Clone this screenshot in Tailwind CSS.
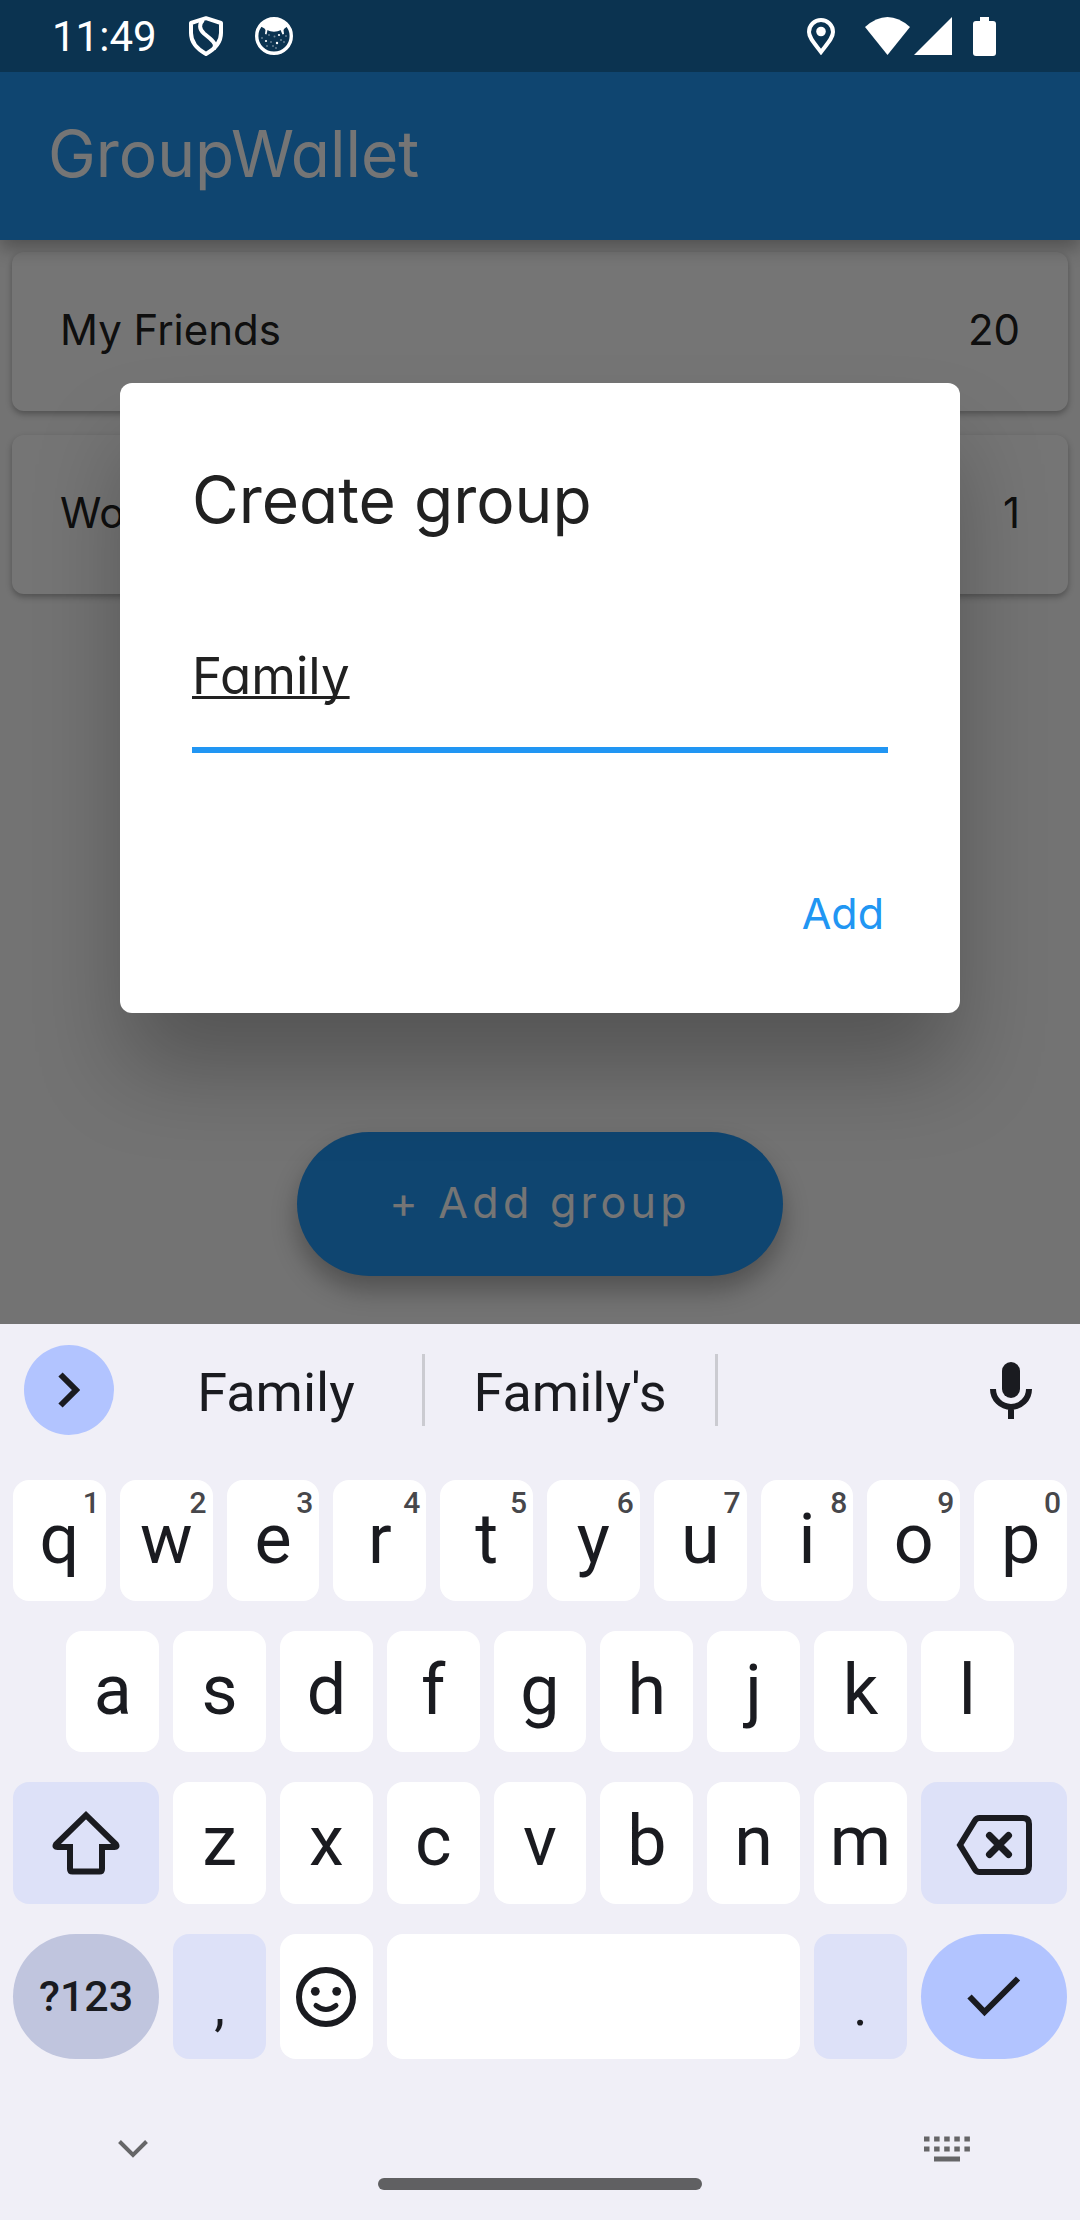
<!DOCTYPE html>
<html lang="en">
<head>
<meta charset="utf-8">
<meta name="viewport" content="width=device-width, initial-scale=1">
<title>GroupWallet</title>
<script src="https://cdn.jsdelivr.net/npm/@tailwindcss/browser@4"></script>
</head>
<body class="flex min-h-screen flex-col bg-[#f0eff7] font-['Inter',sans-serif]">

<!-- App -->
<div class="relative flex flex-1 flex-col bg-[#fafafa] text-[42px] text-[#212121] [font-feature-settings:'cv11']">
  <header class="relative z-10 bg-[#2196f3] shadow-[0_8px_18px_rgba(0,0,0,0.3)]">
    <div class="h-[72px] bg-[#186fae]"></div>
    <h1 class="flex h-[168px] items-center px-12 pb-1 text-[64px] font-normal text-white">GroupWallet</h1>
  </header>
  <ul class="flex flex-1 flex-col gap-6 p-3">
    <li class="flex h-[159px] items-center justify-between rounded-xl bg-white px-12 pb-1 shadow-[0_3px_6px_rgba(0,0,0,0.3)]"><span>My Friends</span><span>20</span></li>
    <li class="flex h-[159px] items-center justify-between rounded-xl bg-white px-12 pb-1 shadow-[0_3px_6px_rgba(0,0,0,0.3)]"><span>Work</span><span>1</span></li>
  </ul>
  <div class="flex justify-center pb-12">
    <button class="h-[144px] rounded-full bg-[#2196f3] px-[92px] pb-1 text-[43px] tracking-widest text-white shadow-[0_14px_26px_rgba(0,0,0,0.3)]">+ Add group</button>
  </div>

  <!-- Modal -->
  <div class="absolute inset-0 z-20 flex flex-col overflow-hidden bg-black/54">
    <div class="flex h-[72px] items-center justify-between pr-[84px] pl-[52px] font-['Roboto',sans-serif] text-white">
      <div class="flex items-center gap-8">
        <span>11:49</span>
        <svg class="h-10 w-[34px]" viewBox="0 0 34 40" fill="none" stroke="currentColor" stroke-width="4" stroke-linejoin="round"><path d="M17 2.200 32 7V17C32 27 25 33.500 17 38 9 33.500 2 27 2 17V7Z"/><path d="M14 4C10 8 10 13 15 17.500L21 22.500C26 27 27 29 25 33"/></svg>
        <svg class="size-[38px]" viewBox="0 0 38 38" fill="currentColor"><circle cx="19" cy="19" r="17.300" fill="none" stroke="currentColor" stroke-width="3.400"/><path d="M5 9 12 2H26L33 9 29.500 11.500 28.500 13 29 17 27.500 17.500 25.500 13C22 15.300 16 15.300 12.500 13L11.500 17.500 10 17 10.500 13 9.500 11.500Z"/><circle cx="24" cy="18" r="1.100"/><circle cx="22" cy="26" r="1.200"/><circle cx="11" cy="24" r="1.100"/><g opacity=".4"><circle cx="14" cy="18" r=".9"/><circle cx="19.500" cy="19.500" r="1"/><circle cx="26" cy="23" r="1"/><circle cx="16" cy="25" r=".9"/><circle cx="12" cy="29" r=".9"/><circle cx="18" cy="29" r=".9"/><circle cx="29" cy="25" r=".9"/><circle cx="31" cy="19" r=".9"/><circle cx="7" cy="21" r=".9"/><circle cx="21" cy="31" r=".9"/></g></svg>
      </div>
      <div class="flex items-center">
        <svg class="mr-[30px] h-[37px] w-7" viewBox="0 0 28 37"><path d="M14 34C8 26 2 20 2 14A12 12 0 0 1 26 14C26 20 20 26 14 34Z" fill="none" stroke="currentColor" stroke-width="4"/><circle cx="14" cy="13.500" r="4.800" fill="currentColor"/></svg>
        <svg class="mr-1 h-[38px] w-[45px]" viewBox="0 0 45 38" fill="currentColor"><path d="M0 10Q22.500-10 45 10L22.500 38Z"/></svg>
        <svg class="mr-[21px] size-[38px]" viewBox="0 0 38 38" fill="currentColor"><path d="M38 0V38H0Z"/></svg>
        <svg class="h-[39px] w-[23px]" viewBox="0 0 23 39" fill="currentColor"><rect y="4" width="23" height="35" rx="3"/><rect x="7" width="9" height="6"/></svg>
      </div>
    </div>
    <div class="flex flex-1 items-center px-[120px]">
      <form role="dialog" aria-labelledby="dlg" class="flex w-full flex-col rounded-xl bg-white px-[72px] pt-[72px] pb-12 shadow-[0_60px_90px_-6px_rgba(0,0,0,0.27)]">
        <h2 id="dlg" class="text-[64px] leading-[90px] font-normal">Create group</h2>
        <input type="text" aria-label="Group name" value="Family" class="mt-[62px] h-[146px] w-full border-b-[6px] border-[#2196f3] pb-1 text-[51px] underline decoration-3 underline-offset-2 outline-none [text-decoration-skip-ink:none]">
        <button type="button" class="mt-28 h-[100px] self-end px-1 pb-1 text-[43px] text-[#2196f3]">Add</button>
      </form>
    </div>
  </div>
</div>

<!-- Keyboard -->
<div class="bg-[#f0eff7] font-['Roboto',sans-serif] text-[#1a1b20]">
  <div class="grid h-[132px] grid-cols-[130px_295fr_293fr_362fr] items-center text-[54px]">
    <button aria-label="More tools" class="ml-6 flex size-[90px] items-center justify-center rounded-full bg-[#b2c4ff]"><svg class="h-9 w-[22px]" viewBox="0 0 22 36" fill="none" stroke="currentColor" stroke-width="6"><path d="M2.500 2.500 18 18 2.500 33.500"/></svg></button>
    <button class="h-[72px] border-r-[3px] border-[#cbcbd1] pt-1.5 leading-[66px]">Family</button>
    <button class="h-[72px] border-r-[3px] border-[#cbcbd1] pt-1.5 leading-[66px]">Family's</button>
    <button aria-label="Voice input" class="flex justify-end pr-12"><svg class="h-[57px] w-[42px]" viewBox="0 0 42 57"><rect x="12" width="18" height="36" rx="9" fill="currentColor"/><path d="M3 27a18 18 0 0 0 36 0M21 45V57" fill="none" stroke="currentColor" stroke-width="6"/></svg></button>
  </div>

  <div class="mt-6 flex flex-col gap-[30px] px-[13px] text-[70px]">
    <div class="grid h-[121px] grid-cols-20 gap-x-3.5">
      <button class="relative col-span-2 rounded-2xl bg-white pb-1 leading-none">q<span class="absolute top-2 right-1.5 text-[30px] leading-none font-medium text-[#47474b]">1</span></button>
      <button class="relative col-span-2 rounded-2xl bg-white pb-1 leading-none">w<span class="absolute top-2 right-1.5 text-[30px] leading-none font-medium text-[#47474b]">2</span></button>
      <button class="relative col-span-2 rounded-2xl bg-white pb-1 leading-none">e<span class="absolute top-2 right-1.5 text-[30px] leading-none font-medium text-[#47474b]">3</span></button>
      <button class="relative col-span-2 rounded-2xl bg-white pb-1 leading-none">r<span class="absolute top-2 right-1.5 text-[30px] leading-none font-medium text-[#47474b]">4</span></button>
      <button class="relative col-span-2 rounded-2xl bg-white pb-1 leading-none">t<span class="absolute top-2 right-1.5 text-[30px] leading-none font-medium text-[#47474b]">5</span></button>
      <button class="relative col-span-2 rounded-2xl bg-white pb-1 leading-none">y<span class="absolute top-2 right-1.5 text-[30px] leading-none font-medium text-[#47474b]">6</span></button>
      <button class="relative col-span-2 rounded-2xl bg-white pb-1 leading-none">u<span class="absolute top-2 right-1.5 text-[30px] leading-none font-medium text-[#47474b]">7</span></button>
      <button class="relative col-span-2 rounded-2xl bg-white pb-1 leading-none">i<span class="absolute top-2 right-1.5 text-[30px] leading-none font-medium text-[#47474b]">8</span></button>
      <button class="relative col-span-2 rounded-2xl bg-white pb-1 leading-none">o<span class="absolute top-2 right-1.5 text-[30px] leading-none font-medium text-[#47474b]">9</span></button>
      <button class="relative col-span-2 rounded-2xl bg-white pb-1 leading-none">p<span class="absolute top-2 right-1.5 text-[30px] leading-none font-medium text-[#47474b]">0</span></button>
    </div>
    <div class="grid h-[121px] grid-cols-20 gap-x-3.5">
      <button class="col-span-2 col-start-2 rounded-2xl bg-white pb-1 leading-none">a</button>
      <button class="col-span-2 rounded-2xl bg-white pb-1 leading-none">s</button>
      <button class="col-span-2 rounded-2xl bg-white pb-1 leading-none">d</button>
      <button class="col-span-2 rounded-2xl bg-white pb-1 leading-none">f</button>
      <button class="col-span-2 rounded-2xl bg-white pb-1 leading-none">g</button>
      <button class="col-span-2 rounded-2xl bg-white pb-1 leading-none">h</button>
      <button class="col-span-2 rounded-2xl bg-white pb-1 leading-none">j</button>
      <button class="col-span-2 rounded-2xl bg-white pb-1 leading-none">k</button>
      <button class="col-span-2 rounded-2xl bg-white pb-1 leading-none">l</button>
    </div>
    <div class="grid h-[122px] grid-cols-20 gap-x-3.5">
      <button aria-label="Shift" class="col-span-3 flex items-center justify-center rounded-2xl bg-[#dde1f8]"><svg class="h-16 w-[68px]" viewBox="0 0 68 64" fill="none" stroke="currentColor" stroke-width="6"><path d="M34 4.200 4 33.500Q2.500 36 5.500 36H18V58Q18 60.500 20.500 60.500H47.500Q50 60.500 50 58V36H62.500Q65.500 36 64 33.500Z"/></svg></button>
      <button class="col-span-2 rounded-2xl bg-white pb-1 leading-none">z</button>
      <button class="col-span-2 rounded-2xl bg-white pb-1 leading-none">x</button>
      <button class="col-span-2 rounded-2xl bg-white pb-1 leading-none">c</button>
      <button class="col-span-2 rounded-2xl bg-white pb-1 leading-none">v</button>
      <button class="col-span-2 rounded-2xl bg-white pb-1 leading-none">b</button>
      <button class="col-span-2 rounded-2xl bg-white pb-1 leading-none">n</button>
      <button class="col-span-2 rounded-2xl bg-white pb-1 leading-none">m</button>
      <button aria-label="Backspace" class="col-span-3 flex items-center justify-center rounded-2xl bg-[#dde1f8] pt-1"><svg class="h-[60px] w-[76px]" viewBox="0 0 76 60" fill="none" stroke="currentColor" stroke-width="6"><path d="M4 30 19 5.500Q20.500 3 23.500 3H67Q73 3 73 9V51Q73 57 67 57H23.500Q20.500 57 19 54.500Z"/><path d="M33.500 20.500 52.500 39.500M52.500 20.500 33.500 39.500" stroke-width="7" stroke-linecap="round"/></svg></button>
    </div>
    <div class="grid h-[125px] grid-cols-20 gap-x-3.5">
      <button class="col-span-3 rounded-full bg-[#c0c5de] text-[43px] leading-none font-medium">?123</button>
      <button class="col-span-2 rounded-2xl bg-[#dde1f8] pt-5 text-[54px] leading-none">,</button>
      <button aria-label="Emoji" class="col-span-2 flex items-center justify-center rounded-2xl bg-white"><svg class="size-[60px]" viewBox="0 0 60 60" fill="none" stroke="currentColor"><circle cx="30" cy="30" r="27" stroke-width="6"/><circle cx="19.300" cy="24.300" r="4.400" fill="currentColor" stroke="none"/><circle cx="40.700" cy="24.300" r="4.400" fill="currentColor" stroke="none"/><path d="M20 38.500Q30 46.500 40 38.500" stroke-width="5" stroke-linecap="round"/></svg></button>
      <button aria-label="Space" class="col-span-8 rounded-2xl bg-white"></button>
      <button class="col-span-2 rounded-2xl bg-[#dde1f8] pt-5 text-[54px] leading-none">.</button>
      <button aria-label="Done" class="col-span-3 flex items-center justify-center rounded-full bg-[#b2c4ff]"><svg class="h-[42px] w-[54px]" viewBox="0 0 54 42" fill="none" stroke="currentColor" stroke-width="6"><path d="M2.500 20.500 17.500 36 51 2.500"/></svg></button>
    </div>
  </div>

  <div class="flex items-center justify-between pt-[77px] pr-[110px] pl-[118px] text-[#666668]">
    <button aria-label="Hide keyboard"><svg class="h-[18px] w-[30px]" viewBox="0 0 30 18" fill="none" stroke="currentColor" stroke-width="4"><path d="M1.500 1.500 15 15 28.500 1.500"/></svg></button>
    <button aria-label="Switch keyboard"><svg class="h-[26px] w-[46px]" viewBox="0 0 46 26" stroke="currentColor" stroke-width="5"><path d="M0 3H46M0 13H46" stroke-dasharray="5.500 4.600"/><path d="M10 23H36"/></svg></button>
  </div>
  <div class="mt-4 flex justify-center pb-[30px]"><div class="h-3 w-[30%] rounded-full bg-[#606062]"></div></div>
</div>
</body>
</html>
